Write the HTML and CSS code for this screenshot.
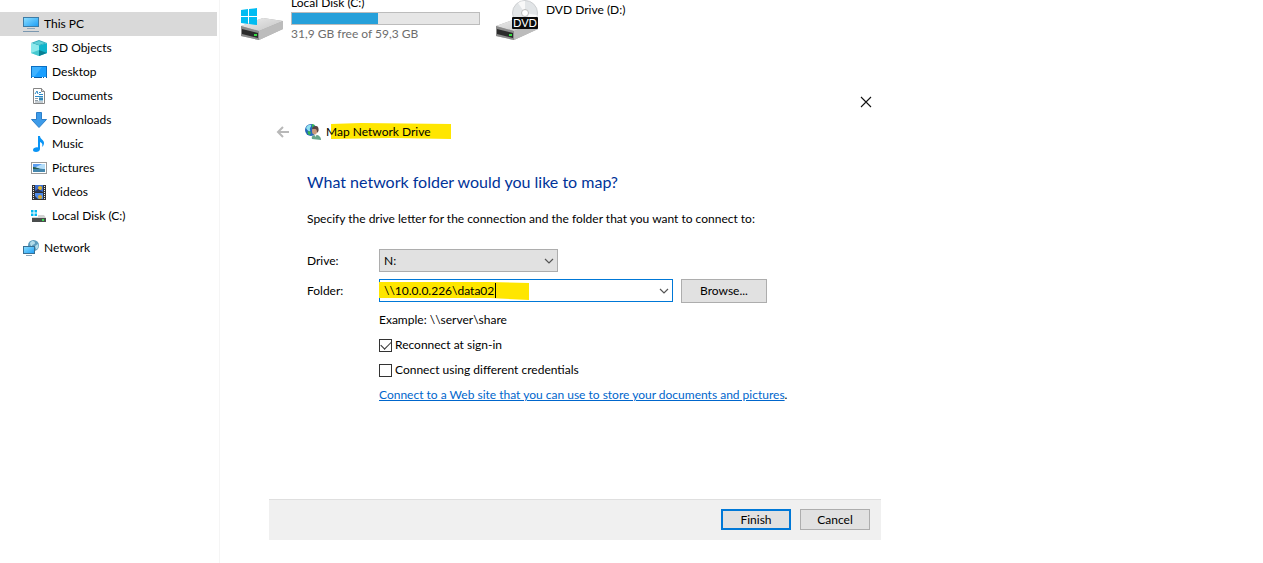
FILE: index.html
```html
<!DOCTYPE html>
<html lang="en">
<head>
  <meta charset="UTF-8" />
  <meta name="viewport" content="width=device-width, initial-scale=1.0" />
  <title>This PC - Map Network Drive</title>
  <link rel="stylesheet" href="styles.css">
</head>
<body>
  <nav class="sidebar" aria-label="Folders">
    <a class="nav-item root active" href="#pc">
      <svg class="icon" viewBox="0 0 16 16">
        <defs>
          <linearGradient id="screen" x1="0" y1="0" x2="1" y2="1"><stop offset="0" stop-color="#8fe0ff"/><stop offset="1" stop-color="#1c9df5"/></linearGradient>
        </defs>
        <rect x=".5" y="1.5" width="15" height="9" fill="url(#screen)" stroke="#3c7ba6"/>
        <path d="M4 12.500h8" stroke="#8fa9bd"/>
        <path d="M0 15.500h16" stroke="#7b98b0"/>
      </svg>
      This PC
    </a>
    <a class="nav-item" href="#objects">
      <svg class="icon" viewBox="0 0 16 16">
        <path d="M0 3l8-3 8 3-8 3z" fill="#2fa9b8"/>
        <path d="M0 3l8 2.500V16L0 13z" fill="#8ce9ec"/>
        <path d="M16 3L8 5.500V16l8-3z" fill="#10b4cc"/>
        <path d="M0 13l8-3v6z" fill="#46c8cf"/>
        <path d="M16 13l-8-3v6z" fill="#087f93"/>
        <path d="M2 3l6-2 6 2-6 2z" fill="#5fd0d8"/>
      </svg>
      3D Objects
    </a>
    <a class="nav-item" href="#desktop">
      <svg class="icon" viewBox="0 0 16 16">
        <rect x=".5" y="2.500" width="15" height="11" fill="#1a9fff" stroke="#0a6ec2"/>
        <path d="M1 3h10L4 12H1z" fill="#3fb2ff"/>
        <path d="M0 13.500h16" stroke="#075aa5"/>
        <path d="M1 13.500h2M11 13.500h1M13 13.500h2" stroke="#fff"/>
      </svg>
      Desktop
    </a>
    <a class="nav-item" href="#documents">
      <svg class="icon" viewBox="0 0 16 16">
        <path d="M2.500.5h8l3 3v12h-11z" fill="#fff" stroke="#858585"/>
        <path d="M10.500.5v3h3" fill="#ddd" stroke="#858585"/>
        <path d="M4 6l2-3 1 3M8 4.500h2M8 6.500h4M4 8.500h8" fill="none" stroke="#2c8bc9"/>
        <path d="M4 10.500h3M4 12.500h3M4 14h8" stroke="#8d9ba5"/>
        <rect x="8" y="9.500" width="4" height="3" fill="#3387b5"/>
      </svg>
      Documents
    </a>
    <a class="nav-item" href="#downloads">
      <svg class="icon" viewBox="0 0 16 16">
        <path d="M5.500.5h5v7h5L8 15.500.5 7.500h5z" fill="#3d9be9" stroke="#2c7fc9"/>
      </svg>
      Downloads
    </a>
    <a class="nav-item" href="#music">
      <svg class="icon" viewBox="0 0 16 16">
        <path d="M7 0h2c0 3 4 4 4 7 0 2-1 3-2 4 1-3 0-4-2-5v7c0 2-2 3-4 3s-3-1-3-2c0-2 3-3 5-2.500z" fill="#0a94f5"/>
      </svg>
      Music
    </a>
    <a class="nav-item" href="#pictures">
      <svg class="icon" viewBox="0 0 16 16">
        <rect x=".5" y="2.500" width="15" height="11" fill="#fff" stroke="#9a9a9a"/>
        <rect x="2" y="4" width="12" height="8" fill="#b4ddf8"/>
        <path d="M2 4h9L5 7H2z" fill="#5b9ef0"/>
        <path d="M2 8c4 0 6 1 12 1v3H2z" fill="#4587ad"/>
        <path d="M2 7c3 0 4 1 8 2H2z" fill="#245a50"/>
      </svg>
      Pictures
    </a>
    <a class="nav-item" href="#videos">
      <svg class="icon" viewBox="0 0 16 16">
        <rect x="1" y="1" width="14" height="15" fill="#333"/>
        <rect x="4" y="1" width="8" height="7" fill="#3b6fd0"/>
        <rect x="4" y="9" width="8" height="6" fill="#4e8bea"/>
        <path d="M2.500 2v13M13.500 2v13" stroke="#eee" stroke-dasharray="1 1"/>
        <circle cx="9" cy="4" r="2" fill="#e5b52b"/>
        <circle cx="7" cy="6" r="1" fill="#b73c3c"/>
        <path d="M4 7l3-2 5 3H4z" fill="#26385d"/>
        <circle cx="9" cy="13" r="2" fill="#d8a92f"/>
        <path d="M4 12l3 3H4z" fill="#26385d"/>
      </svg>
      Videos
    </a>
    <a class="nav-item" href="#disk">
      <svg class="icon" viewBox="0 0 16 16">
        <path d="M0 2h2.500v2.500H0zM3.500 2H6v2.500H3.500zM0 5.500h2.500V8H0zM3.500 5.500H6V8H3.500z" fill="#00b7f0"/>
        <path d="M7 7h6l2 3H1V9h6z" fill="#d3d3d3"/>
        <rect x="1" y="10" width="14" height="4" fill="#4a4d4d"/>
        <rect x="11" y="11" width="2" height="2" fill="#3ae050"/>
      </svg>
      Local Disk (C:)
    </a>
    <a class="nav-item root network" href="#network">
      <svg class="icon" viewBox="0 0 16 16">
        <circle cx="10.500" cy="5.500" r="5.500" fill="#5d9dbe"/>
        <path d="M7 3c2-3 5-2 5 0S9 4 9 6 7 5 7 3zM12 6l3-2c1 3-1 6-2 5z" fill="#b3dcea"/>
        <rect x=".5" y="6.500" width="11" height="7" fill="url(#screen)" stroke="#386f93"/>
        <path d="M3 15.500h6" stroke="#8aa5b8"/>
      </svg>
      Network
    </a>
  </nav>

  <main class="content">
    <section class="drives" aria-label="Devices and drives">
      <div class="drive">
        <svg class="drive-icon" viewBox="0 0 48 48">
          <defs>
            <linearGradient id="case" x1="0" y1="0" x2="1" y2="1"><stop offset="0" stop-color="#ededed"/><stop offset="1" stop-color="#c4c4c4"/></linearGradient>
          </defs>
          <path d="M4 31l22-8 20 3v8L22 45 4 41z" fill="#aaa"/>
          <path d="M4 31l22-8 20 3-24 10z" fill="url(#case)"/>
          <path d="M22 36l24-10v8L22 45z" fill="#bcbcbc"/>
          <path d="M4 31l18 5v9L4 41z" fill="#8b8b8b"/>
          <path d="M5 34l16 4v5L5 39z" fill="#2b2b2b"/>
          <rect x="17" y="39" width="3" height="2" fill="#35df42"/>
          <path d="M4 15l7-1v7H4zM12 14l8-1v8h-8zM4 22h7v7l-7-1zM12 22h8v8l-8-1z" fill="#00bcf2"/>
        </svg>
        <div class="drive-info">
          <span>Local Disk (C:)</span>
          <div class="usage"><div class="usage-fill" style="width: 46%"></div></div>
          <span class="free">31,9 GB free of 59,3 GB</span>
        </div>
      </div>
      <div class="drive">
        <svg class="drive-icon" viewBox="0 0 48 48">
          <path d="M4 31l22-8 20 3v8L22 45 4 41z" fill="#aaa"/>
          <path d="M4 31l22-8 20 3-24 10z" fill="url(#case)"/>
          <path d="M22 36l24-10v8L22 45z" fill="#bcbcbc"/>
          <path d="M4 31l18 5v9L4 41z" fill="#8b8b8b"/>
          <path d="M5 34l16 4v5L5 39z" fill="#2b2b2b"/>
          <rect x="17" y="39" width="3" height="2" fill="#35df42"/>
          <circle cx="33" cy="18" r="12.500" fill="#e2e5e7" stroke="#cdcfd1"/>
          <path d="M33 18L26 8a12 12 0 0 1 7-2zM33 18l12 2a12 12 0 0 1-4 7z" fill="#f8f8f8"/>
          <circle cx="33" cy="18" r="3.500" fill="#fff" stroke="#bbb"/>
          <rect x="20" y="22" width="26" height="12" rx="1" fill="#0c0c0c"/>
          <text class="dvd-label" x="33" y="32" text-anchor="middle">DVD</text>
        </svg>
        <div class="drive-info bare">
          <span>DVD Drive (D:)</span>
        </div>
      </div>
    </section>

    <form class="dialog" role="dialog" aria-labelledby="dialogTitle">
      <div class="titlebar">
        <button class="plain-btn" type="button" aria-label="Close">
          <svg class="close-icon" viewBox="0 0 12 12"><path d="M1 1l10 10M11 1L1 11" fill="none" stroke="#111" stroke-width="1.100"/></svg>
        </button>
      </div>
      <header class="wizard-head">
        <button class="plain-btn" type="button" aria-label="Back" disabled>
          <svg class="back-icon" viewBox="0 0 14 14"><path d="M13 7H2M7 2L2 7l5 5" fill="none" stroke="#b8b8b8" stroke-width="2"/></svg>
        </button>
        <svg class="icon" viewBox="0 0 16 16">
          <circle cx="6" cy="6" r="6" fill="#2667b8"/>
          <path d="M1 4c1-3 4-4 5-3S4 4 5 6s-2 2-4-2z" fill="#8fe0f0"/>
          <path d="M3 7l3 1-1 3c-2 0-3-2-2-4zM7 0l3 1-3 3z" fill="#36b74c"/>
          <path d="M7 15c-1-3 1-4 4-4s5 2 5 5z" fill="#65a58a"/>
          <path d="M9 10l1.500 3 1.500-3z" fill="#f3f3f3"/>
          <ellipse cx="9.500" cy="7" rx="2.500" ry="3.500" fill="#c99a7c"/>
          <path d="M7 5c0-2 2-3 4-3s3 2 2.500 5l-1.500 2c0-2 0-4-2-4z" fill="#5c4541"/>
        </svg>
        <span class="title" id="dialogTitle"><svg class="marker title-marker" viewBox="0 0 120 17" preserveAspectRatio="none"><path d="M0 1L30 0l90 1v15l-60-1-60 1z" fill="#ffe600"/></svg><span class="over">Map Network Drive</span></span>
      </header>

      <div class="wizard-body">
        <h1>What network folder would you like to map?</h1>
        <p class="intro">Specify the drive letter for the connection and the folder that you want to connect to:</p>

        <div class="fields">
          <label for="drive">Drive:</label>
          <div class="field-row">
            <div class="combo drive-combo">
              <select id="drive"><option>N:</option></select>
              <svg class="chevron" viewBox="0 0 10 6"><path d="M1 1l4 4 4-4" fill="none" stroke="#555" stroke-width="1.200"/></svg>
            </div>
          </div>

          <label for="folder">Folder:</label>
          <div class="field-row">
            <div class="combo folder-combo">
              <svg class="marker folder-marker" viewBox="0 0 150 19" preserveAspectRatio="none"><path d="M0 1h110l40 1v17l-40-2H0z" fill="#ffe600"/></svg>
              <input id="folder" type="text" value="\\10.0.0.226\data02">
              <span class="caret"></span>
              <svg class="chevron" viewBox="0 0 10 6"><path d="M1 1l4 4 4-4" fill="none" stroke="#555" stroke-width="1.200"/></svg>
            </div>
            <button class="button browse-btn" type="button">Browse...</button>
          </div>
        </div>

        <div class="options">
          <span>Example: \\server\share</span>
          <label class="check"><input type="checkbox" checked>Reconnect at sign-in</label>
          <label class="check"><input type="checkbox">Connect using different credentials</label>
          <span><a href="#web">Connect to a Web site that you can use to store your documents and pictures</a>.</span>
        </div>
      </div>

      <footer class="wizard-foot">
        <button class="button primary-btn" type="submit">Finish</button>
        <button class="button" type="button">Cancel</button>
      </footer>
    </form>
  </main>
</body>
</html>
```
FILE: styles.css
```css
* {
  box-sizing: border-box;
}
body {
  margin: 0;
  min-height: 100vh;
  display: flex;
  overflow: hidden;
  background: #fff;
  color: #000;
  font-family: Lato, "Segoe UI", sans-serif;
  font-size: 12px;
  line-height: 16px;
}
button, input, select {
  font: inherit;
  color: inherit;
}

/* folder tree */
.sidebar {
  flex: 0 0 220px;
  padding: 12px 2px 0 0;
  border-right: 1px solid #f5f5f5;
}
.nav-item {
  display: flex;
  align-items: center;
  gap: 5px;
  height: 24px;
  padding-left: 31px;
  color: #000;
  text-decoration: none;
}
.nav-item.root {
  padding-left: 23px;
}
.nav-item.active {
  background: #d9d9d9;
}
.nav-item.network {
  margin-top: 8px;
}
.icon {
  width: 16px;
  height: 16px;
  flex: none;
}

/* drives */
.content {
  flex: 1;
  min-width: 0;
}
.drives {
  display: flex;
  gap: 12px;
  margin-top: -5px;
  padding-left: 17px;
}
.drive {
  display: flex;
  gap: 6px;
}
.drive-icon {
  width: 48px;
  height: 48px;
  flex: none;
}
.drive-info {
  width: 189px;
  display: flex;
  flex-direction: column;
}
.drive-info.bare {
  padding-top: 7px;
}
.usage {
  height: 13px;
  margin: 1px 0;
  border: 1px solid #bcbcbc;
  background: #e6e6e6;
}
.usage-fill {
  height: 100%;
  background: #26a0da;
}
.free {
  color: #6d6d6d;
}
.dvd-label {
  fill: #fff;
  font-size: 11px;
}

/* map network drive dialog */
.dialog {
  max-width: 612px;
  margin: 43px 0 0 49px;
  background: #fff;
}
.plain-btn {
  display: flex;
  padding: 0;
  border: none;
  background: none;
}
.titlebar {
  display: flex;
  justify-content: flex-end;
  padding: 10px 9px;
}
.close-icon {
  width: 12px;
  height: 12px;
}
.wizard-head {
  display: flex;
  align-items: center;
  padding: 6px 7px;
}
.back-icon {
  width: 14px;
  height: 14px;
  margin-right: 15px;
}
.title {
  position: relative;
  margin-left: 5px;
}
.marker {
  position: absolute;
}
.over {
  position: relative;
}
.title-marker {
  left: 5px;
  top: -1px;
  width: 120px;
  height: 17px;
}
.wizard-body {
  padding: 24px 38px 96px;
}
h1 {
  margin: 0;
  color: #003399;
  font-size: 16px;
  font-weight: normal;
  line-height: 24px;
}
.intro {
  margin: 17px 0 22px;
}
.fields {
  display: grid;
  grid-template-columns: 72px 1fr;
  row-gap: 6px;
  align-items: center;
}
.field-row {
  display: flex;
  gap: 8px;
  height: 24px;
}
.combo {
  position: relative;
  height: 23px;
  border: 1px solid #adadad;
}
.drive-combo {
  width: 179px;
  background: #e1e1e1;
}
.folder-combo {
  width: 294px;
  border-color: #0078d7;
}
.combo select,
.combo input {
  position: relative;
  display: block;
  appearance: none;
  width: 100%;
  height: 100%;
  padding: 0 20px 0 4px;
  border: none;
  outline: none;
  background: transparent;
}
.chevron {
  position: absolute;
  right: 3px;
  top: 8px;
  width: 10px;
  height: 6px;
  pointer-events: none;
}
.folder-marker {
  left: -1px;
  top: 1px;
  width: 150px;
  height: 19px;
}
.caret {
  position: absolute;
  left: 115px;
  top: 3px;
  width: 1px;
  height: 15px;
  background: #000;
}
.button {
  width: 70px;
  height: 21px;
  padding: 0;
  border: 1px solid #adadad;
  background: #e1e1e1;
}
.browse-btn {
  width: 86px;
  height: 24px;
}
.primary-btn {
  border: 2px solid #0078d7;
}
.options {
  display: flex;
  flex-direction: column;
  gap: 9px;
  margin: 9px 0 0 72px;
}
.check {
  display: flex;
  align-items: center;
  gap: 3px;
}
.check input {
  appearance: none;
  display: grid;
  place-items: center;
  width: 13px;
  height: 13px;
  margin: 0;
  border: 1px solid #333;
}
.check input:checked::after {
  content: "";
  width: 9px;
  height: 5px;
  margin-top: -3px;
  border: solid #333;
  border-width: 0 0 1px 1px;
  rotate: -45deg;
}
a {
  color: #0066cc;
}
.wizard-foot {
  display: flex;
  justify-content: flex-end;
  gap: 9px;
  padding: 9px 11px 10px;
  border-top: 1px solid #dfdfdf;
  background: #f0f0f0;
}
```
